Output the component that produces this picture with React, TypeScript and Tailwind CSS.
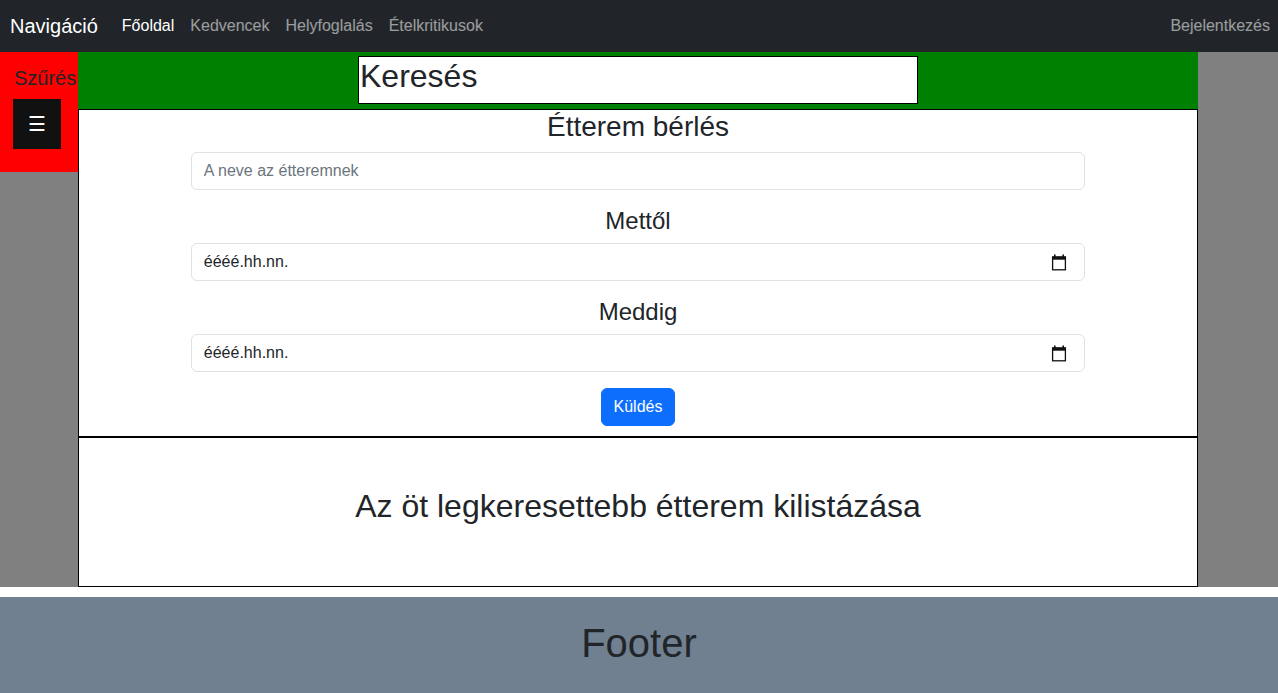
import React from "react";

function CalendarIcon() {
	return (
		<svg width="16" height="17" viewBox="0 0 16 17" className="shrink-0">
			<rect x="3" y="0.5" width="1.6" height="3" fill="#111" />
			<rect x="11.4" y="0.5" width="1.6" height="3" fill="#111" />
			<rect x="1" y="2.5" width="14" height="3.2" fill="#111" />
			<rect x="1.6" y="3" width="12.8" height="12.8" fill="none" stroke="#111" strokeWidth="1.3" />
		</svg>
	);
}

function DateField() {
	return (
		<div className="mx-auto flex h-[38px] w-4/5 items-center justify-between rounded-[6px] border border-[#dee2e6] bg-white pl-[12px] pr-[17px] text-[16px] text-[#212529]">
			<span>éééé.hh.nn.</span>
			<CalendarIcon />
		</div>
	);
}

const links = ["Kedvencek", "Helyfoglalás", "Ételkritikusok"];

export default function App() {
	return (
		<div className="min-h-screen bg-white font-['Liberation_Sans',Arial,sans-serif] text-[#212529]">
			<nav className="flex h-[52px] items-center bg-[#212529] pl-[10px] pr-[8px]">
				<a className="mr-[16px] text-[20px] text-white">Navigáció</a>
				<ul className="flex text-[16px]">
					<li className="px-[8px] text-white">Főoldal</li>
					{links.map((l) => (
						<li key={l} className="px-[8px] text-white/55">
							{l}
						</li>
					))}
				</ul>
				<a className="ml-auto text-[16px] text-white/55">Bejelentkezés</a>
			</nav>

			<div className="flex bg-[#808080]">
				<aside className="w-[78px]">
					<div className="h-[120px] bg-[#ff0000] pt-[14px]">
						<div className="whitespace-nowrap pl-[14px] text-[20px] leading-[24px]">Szűrés</div>
						<button className="ml-[13px] mt-[9px] flex h-[50px] w-[48px] items-center justify-center bg-[#111111] text-[20px] text-white">
							☰
						</button>
					</div>
				</aside>

				<main className="w-[1120px]">
					<div className="flex h-[58px] justify-center border-b border-black bg-[#008000] pt-[4px]">
						<div className="h-[48px] w-1/2 border border-black bg-white pl-[1px] text-[32px] leading-[38px]">
							Keresés
						</div>
					</div>

					<section className="border-x border-b-2 border-black bg-white pb-[10px] text-center">
						<h3 className="mb-[8px] text-[28px] leading-[34px]">Étterem bérlés</h3>
						<div className="mx-auto flex h-[38px] w-4/5 items-center rounded-[6px] border border-[#dee2e6] px-[12px] text-left text-[16px] text-[#6c757d]">
							A neve az étteremnek
						</div>
						<h4 className="mb-[8.5px] mt-[15.5px] text-[24px] leading-[29px]">Mettől</h4>
						<DateField />
						<h4 className="mb-[8.5px] mt-[15.5px] text-[24px] leading-[29px]">Meddig</h4>
						<DateField />
						<button className="mt-[16px] h-[38px] rounded-[6px] border border-[#0d6efd] bg-[#0d6efd] px-[12px] text-[16px] text-white">
							Küldés
						</button>
					</section>

					<section className="h-[149px] border-x border-b border-black bg-white pt-[49px] text-center">
						<h2 className="text-[32px] leading-[39px]">Az öt legkeresettebb étterem kilistázása</h2>
					</section>
				</main>

				<div className="flex-1" />
			</div>

			<footer className="mt-[10px] flex h-[96px] items-center justify-center bg-[#708090]">
				<h1 className="pb-[4px] text-[40px] leading-[48px]">Footer</h1>
			</footer>
		</div>
	);
}
